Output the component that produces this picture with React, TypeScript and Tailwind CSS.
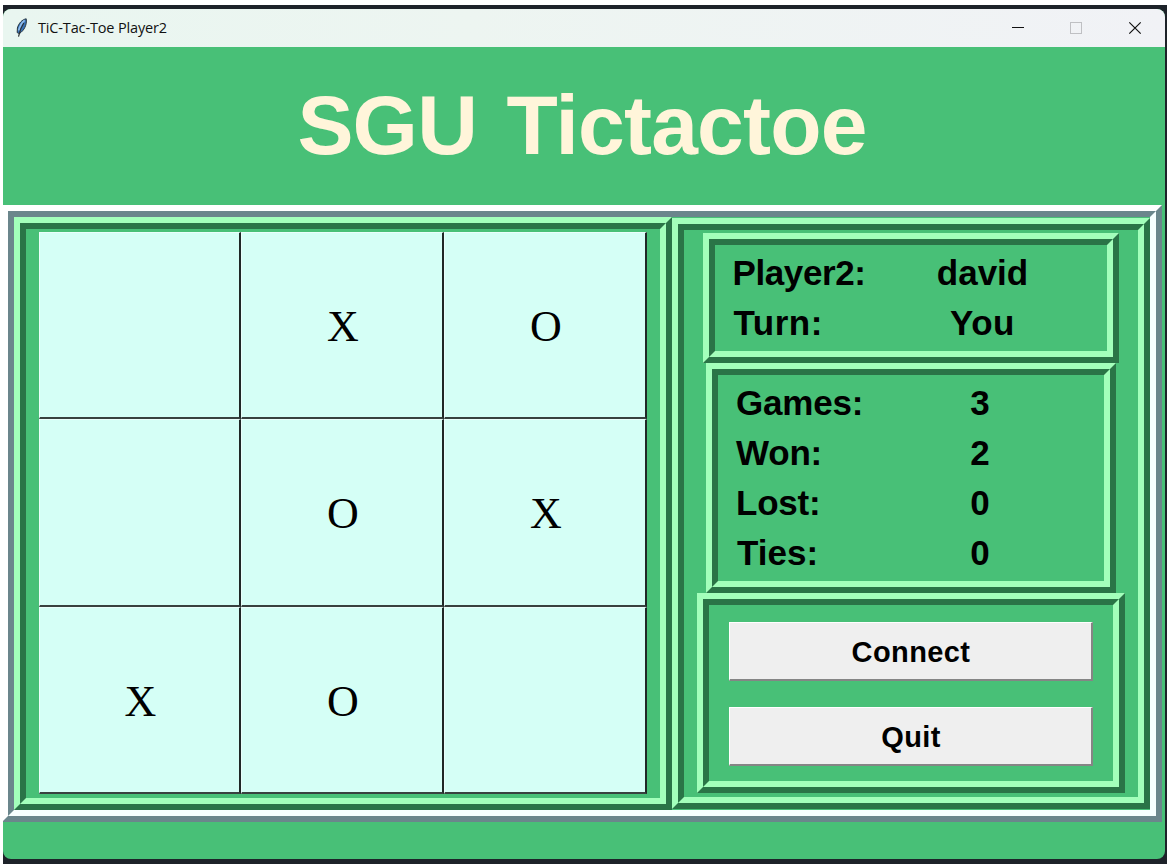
import React from "react";

type RidgeProps = { className?: string; children?: React.ReactNode };

/* Tk style ridge border: a raised bevel with a sunken bevel inside it. */
function Ridge({ className = "", children }: RidgeProps) {
  return (
    <div className={`flex border-6 border-t-[#a3ffbb] border-l-[#a3ffbb] border-r-[#2a7447] border-b-[#2a7447] ${className}`}>
      <div className="flex grow flex-col border-6 border-t-[#2a7447] border-l-[#2a7447] border-r-[#a3ffbb] border-b-[#a3ffbb]">
        {children}
      </div>
    </div>
  );
}

type RowProps = { label: string; value: string; labelClass?: string; valueClass?: string };

function Row({ label, value, labelClass = "", valueClass = "" }: RowProps) {
  return (
    <div className="flex h-[50px] items-center whitespace-nowrap text-[35px] leading-[50px] font-bold text-black">
      <div className={`w-[157px] ${labelClass}`}>{label}</div>
      <div className={`w-[174px] text-center ${valueClass}`}>{value}</div>
    </div>
  );
}

function TkButton({ children }: { children: React.ReactNode }) {
  return (
    <button className="flex h-[59px] w-[364px] items-center justify-center border-t border-l border-r-2 border-b-2 border-t-white border-l-white border-r-[#858585] border-b-[#858585] bg-[#efefef] pt-[3px] pl-px text-[29px] font-bold tracking-[0.4px] text-black">
      {children}
    </button>
  );
}

const board = ["", "X", "O", "", "O", "X", "X", "O", ""];

function Feather() {
  return (
    <svg className="h-[20px] w-[14px]" viewBox="0 0 14 20">
      <path d="M11.2 0.8C7 1.6 3.6 5.4 2.4 10L2.2 14.6L4.4 15.6C9 12.5 12.2 7 11.2 0.8Z" fill="#3974b8" stroke="#26343f" strokeWidth="1" />
      <path d="M9.6 2.4C6.8 4.5 4.8 8.5 3.7 12.6" fill="none" stroke="#8fbcec" strokeWidth="1.8" />
      <path d="M8.8 5C6.8 8 4.8 12 3.5 18.6" fill="none" stroke="#2c3034" strokeWidth="1.2" />
    </svg>
  );
}

export default function App() {
  return (
    <div className="h-[867px] w-[1173px] overflow-hidden bg-white pt-[5px] pl-[3px] font-['Liberation_Sans',Arial,sans-serif]">
      <div className="h-[859px] w-[1164px] bg-[#1d2229] pt-[4px] pr-[2px]">
        <div className="flex h-[850px] w-[1162px] flex-col overflow-hidden rounded-lg bg-[#48c077]">
          <header className="flex h-[38px] shrink-0 items-center bg-linear-to-r from-[#e9f6f0] via-[#edf5f1] via-40% to-[#f1f2f6] pl-[12px]">
            <Feather />
            <span className="ml-[9px] pb-px font-['Open_Sans','Noto_Sans',sans-serif] text-[14.5px] tracking-[-0.15px] text-[#111]">
              TiC-Tac-Toe Player2
            </span>
            <svg className="ml-auto h-[38px] w-[160px]" viewBox="0 0 160 38" fill="none">
              <path d="M7 18.5H19" stroke="#111" />
              <rect x="65.5" y="13.5" width="11" height="11" stroke="#bfc0c3" />
              <path d="M124.3 13.3L135.7 24.7M135.7 13.3L124.3 24.7" stroke="#111" strokeWidth="1.2" />
            </svg>
          </header>

          <h1 className="flex h-[158px] shrink-0 items-center justify-center pr-[4px] pb-[2px] text-[84px] leading-none font-bold tracking-[-0.8px] text-[#fff5da] [word-spacing:7px]">
            SGU Tictactoe
          </h1>

          <main className="-ml-px flex h-[617px] w-[1160px] shrink-0 border-6 border-t-white border-l-white border-r-[#6b868c] border-b-[#6b868c]">
            <div className="flex grow border-6 border-t-[#6b868c] border-l-[#6b868c] border-r-[#f7ffff] border-b-[#f7ffff]">
              <Ridge className="h-[593px] w-[658px]">
                <div className="mt-[3px] ml-[13px] grid h-[562px] w-[608px] grid-cols-[202px_203px_203px] grid-rows-[187px_188px_187px]">
                  {board.map((mark, i) => (
                    <div
                      key={i}
                      className="flex items-center justify-center border-t border-l border-r-2 border-b-2 border-t-[#eafffb] border-l-[#eafffb] border-r-[#202826] border-b-[#38413f] bg-[#d5fff6] pt-[3px] pl-[2px] font-['Liberation_Serif','Times_New_Roman',serif] text-[44px] leading-none text-black"
                    >
                      {mark}
                    </div>
                  ))}
                </div>
              </Ridge>

              <Ridge className="mt-px h-[591px] w-[478px]">
                <div className="flex flex-col items-center pt-[3px]">
                  <Ridge className="-ml-px h-[130px] w-[416px]">
                    <div className="pt-[3px] pl-[19px]">
                      <Row label="Player2:" value="david" labelClass="-ml-px mr-px tracking-[-0.4px]" valueClass="ml-[5px]" />
                      <Row label="Turn:" value="You" labelClass="tracking-[0.5px]" valueClass="ml-[5px] tracking-[0.5px]" />
                    </div>
                  </Ridge>
                  <Ridge className="h-[230px] w-[410px]">
                    <div className="pt-[3px] pl-[18px]">
                      <Row label="Games:" value="3" labelClass="tracking-[-0.2px]" />
                      <Row label="Won:" value="2" labelClass="tracking-[-0.2px]" />
                      <Row label="Lost:" value="0" labelClass="tracking-[-0.2px]" />
                      <Row label="Ties:" value="0" labelClass="pl-px" />
                    </div>
                  </Ridge>
                  <Ridge className="h-[200px] w-[428px]">
                    <div className="flex flex-col items-center gap-[26px] pt-[17px]">
                      <TkButton>Connect</TkButton>
                      <TkButton>Quit</TkButton>
                    </div>
                  </Ridge>
                </div>
              </Ridge>
            </div>
          </main>
        </div>
      </div>
    </div>
  );
}
